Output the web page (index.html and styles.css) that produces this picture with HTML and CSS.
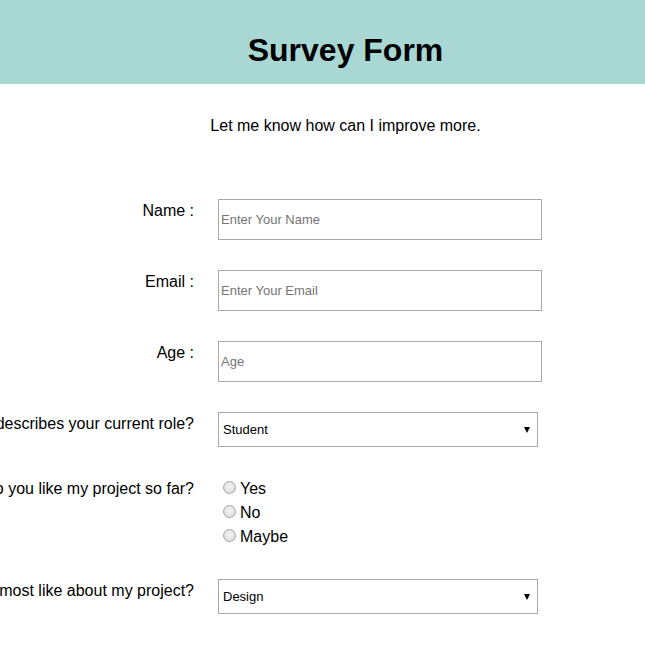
FILE: index.html
```html
<!DOCTYPE html>
<html lang="en">
<head>
<meta charset="utf-8">
<title>Survey Form</title>
<link rel="stylesheet" href="styles.css">
</head>
<body>
<header class="banner">
  <h1 class="title">Survey Form</h1>
</header>
<p class="intro">Let me know how can I improve more.</p>
<form class="survey">
  <div class="row row-text">
    <label class="lbl" for="name">Name :</label>
    <input class="field" id="name" type="text" placeholder="Enter Your Name">
  </div>
  <div class="row row-text">
    <label class="lbl" for="email">Email :</label>
    <input class="field" id="email" type="email" placeholder="Enter Your Email">
  </div>
  <div class="row row-text">
    <label class="lbl" for="age">Age :</label>
    <input class="field" id="age" type="number" placeholder="Age">
  </div>
  <div class="row row-select">
    <label class="lbl" for="role">Which option best describes your current role?</label>
    <div class="select-wrap">
      <select class="dropdown" id="role">
        <option>Student</option>
        <option>Full Time Job</option>
        <option>Other</option>
      </select>
    </div>
  </div>
  <div class="row row-radio">
    <span class="lbl">Do you like my project so far?</span>
    <div class="options">
      <label class="opt"><input class="radio" type="radio" name="like">Yes</label>
      <label class="opt"><input class="radio" type="radio" name="like">No</label>
      <label class="opt"><input class="radio" type="radio" name="like">Maybe</label>
    </div>
  </div>
  <div class="row row-select">
    <label class="lbl" for="most">What do you most like about my project?</label>
    <div class="select-wrap">
      <select class="dropdown" id="most">
        <option>Design</option>
        <option>Content</option>
        <option>Layout</option>
      </select>
    </div>
  </div>
</form>
</body>
</html>
```

FILE: styles.css
```css
html, body {
  margin: 0;
  padding: 0;
  background: #ffffff;
  font-family: "Liberation Sans", Arial, sans-serif;
  color: #000;
  overflow-x: hidden;
}

.banner {
  background: #a9d7d3;
  height: 84px;
  box-sizing: border-box;
  padding: 32px 0 0 46px;
}

.title {
  margin: 0;
  font-size: 32px;
  font-weight: bold;
  line-height: 37px;
  text-align: center;
}

.intro {
  margin: 33px 0 0 0;
  padding-left: 46px;
  font-size: 16px;
  line-height: 18px;
  text-align: center;
}

.survey {
  margin-top: 64px;
}

.row {
  display: flex;
  align-items: flex-start;
  gap: 24px;
  margin-bottom: 30px;
}

.lbl {
  flex: none;
  width: 194px;
  display: flex;
  justify-content: flex-end;
  white-space: nowrap;
  font-size: 16px;
  line-height: 18px;
  padding-top: 3px;
}

.field {
  box-sizing: border-box;
  width: 324px;
  height: 41px;
  margin: 0;
  border: 1px solid #a9a9a9;
  padding: 0 2px;
  font-family: "Liberation Sans", Arial, sans-serif;
  font-size: 13px;
  background: #fff;
  outline: none;
  -moz-appearance: textfield;
}

.field::-webkit-outer-spin-button,
.field::-webkit-inner-spin-button {
  -webkit-appearance: none;
  margin: 0;
}

.field::placeholder {
  color: #757575;
}

.select-wrap {
  position: relative;
  width: 320px;
  height: 35px;
}

.select-wrap::after {
  content: "";
  position: absolute;
  right: 8px;
  top: 15px;
  width: 0;
  height: 0;
  border-left: 3px solid transparent;
  border-right: 3px solid transparent;
  border-top: 6px solid #000;
  pointer-events: none;
}

.dropdown {
  -webkit-appearance: none;
  appearance: none;
  box-sizing: border-box;
  width: 320px;
  height: 35px;
  margin: 0;
  border: 1px solid #a9a9a9;
  border-radius: 0;
  padding: 0 0 0 4px;
  background: #fff;
  font-family: "Liberation Sans", Arial, sans-serif;
  font-size: 13px;
  color: #000;
  outline: none;
}

.options {
  display: flex;
  flex-direction: column;
}

.opt {
  display: block;
  font-size: 16px;
  line-height: 24px;
  height: 24px;
}

.radio {
  -webkit-appearance: none;
  appearance: none;
  display: inline-block;
  box-sizing: border-box;
  width: 13px;
  height: 13px;
  margin: 3px 4px 0 5px;
  border: 1px solid #a3a3a3;
  border-radius: 50%;
  background: radial-gradient(circle at 50% 40%, #f4f4f4 0%, #e2e2e2 60%, #d2d2d2 100%);
  vertical-align: baseline;
}
```
